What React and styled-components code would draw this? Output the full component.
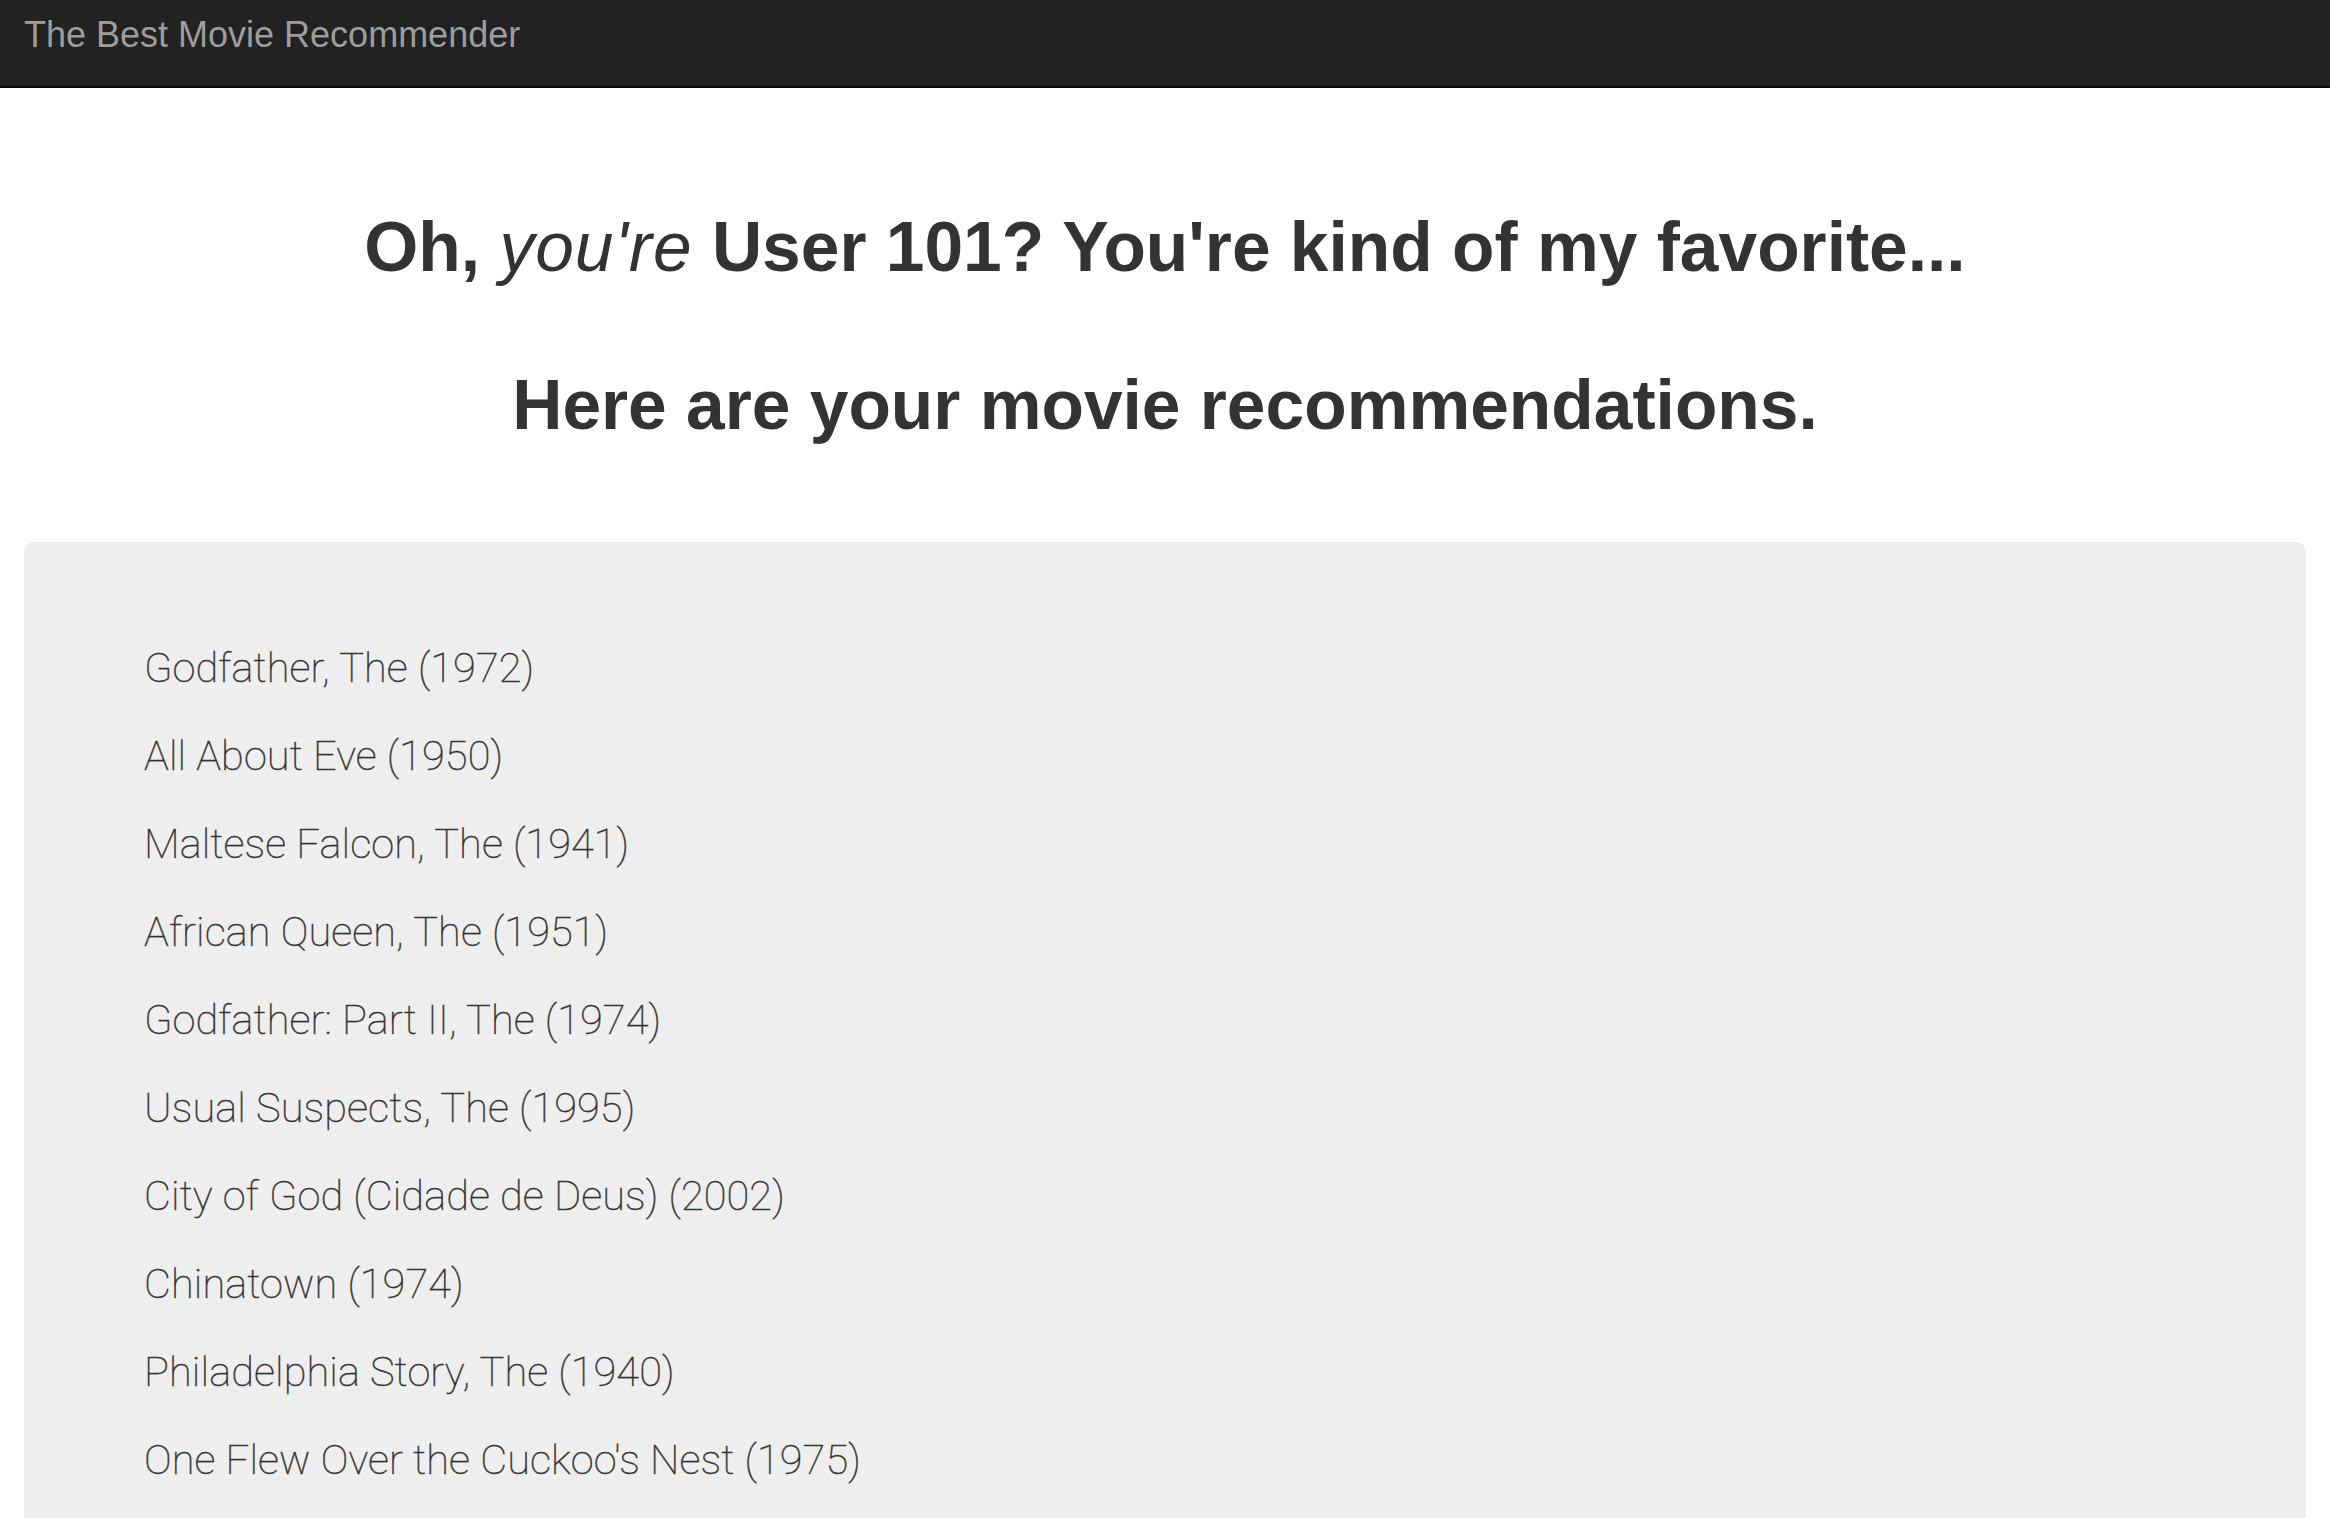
import React from 'react';
import styled, { createGlobalStyle } from 'styled-components';

const movies = [
  'Godfather, The (1972)',
  'All About Eve (1950)',
  'Maltese Falcon, The (1941)',
  'African Queen, The (1951)',
  'Godfather: Part II, The (1974)',
  'Usual Suspects, The (1995)',
  'City of God (Cidade de Deus) (2002)',
  'Chinatown (1974)',
  'Philadelphia Story, The (1940)',
  "One Flew Over the Cuckoo's Nest (1975)",
];

const GlobalStyle = createGlobalStyle`
  html, body {
    margin: 0;
    padding: 0;
    background: #fff;
  }

  body {
    font-family: "Liberation Sans", Arial, sans-serif;
    color: #333;
  }
`;

const Navbar = styled.nav`
  height: 86px;
  background: #222;
  border-bottom: 2px solid #080808;
  box-sizing: content-box;
`;

const Brand = styled.a`
  display: inline-block;
  padding: 15px 24px 0;
  font-size: 36px;
  line-height: 40px;
  color: #9d9d9d;
  text-decoration: none;
`;

const Main = styled.main`
  padding: 119px 24px 0;
`;

const Heading = styled.h1`
  margin: 0 0 ${({ last }) => (last ? '97px' : '78px')};
  font-size: 69.5px;
  line-height: 80px;
  font-weight: 700;
  text-align: center;
  color: #333;

  em {
    font-weight: 400;
    letter-spacing: 1px;
  }
`;

const Jumbotron = styled.section`
  background: #eee;
  border-radius: 10px;
  padding: 82px 120px 80px;
`;

const MovieList = styled.ul`
  list-style: none;
  margin: 0;
  padding: 0;
`;

const Movie = styled.li`
  font-family: Roboto, "Liberation Sans", sans-serif;
  font-size: 41.5px;
  line-height: 88px;
  font-weight: 100;
  letter-spacing: 0.1px;
  color: #333;
  -webkit-text-stroke: 0.45px #333;
`;

const App = () => (
  <>
    <GlobalStyle />

    <Navbar>
      <Brand href={'#'}>
        {'The Best Movie Recommender'}
      </Brand>
    </Navbar>

    <Main>
      <Heading>
        {'Oh, '}
        <em>{"you're"}</em>
        {" User 101? You're kind of my favorite..."}
      </Heading>

      <Heading last>
        {'Here are your movie recommendations.'}
      </Heading>

      <Jumbotron>
        <MovieList>
          {movies.map((title) => (
            <Movie key={title}>
              {title}
            </Movie>
          ))}
        </MovieList>
      </Jumbotron>
    </Main>
  </>
);

export default App;
